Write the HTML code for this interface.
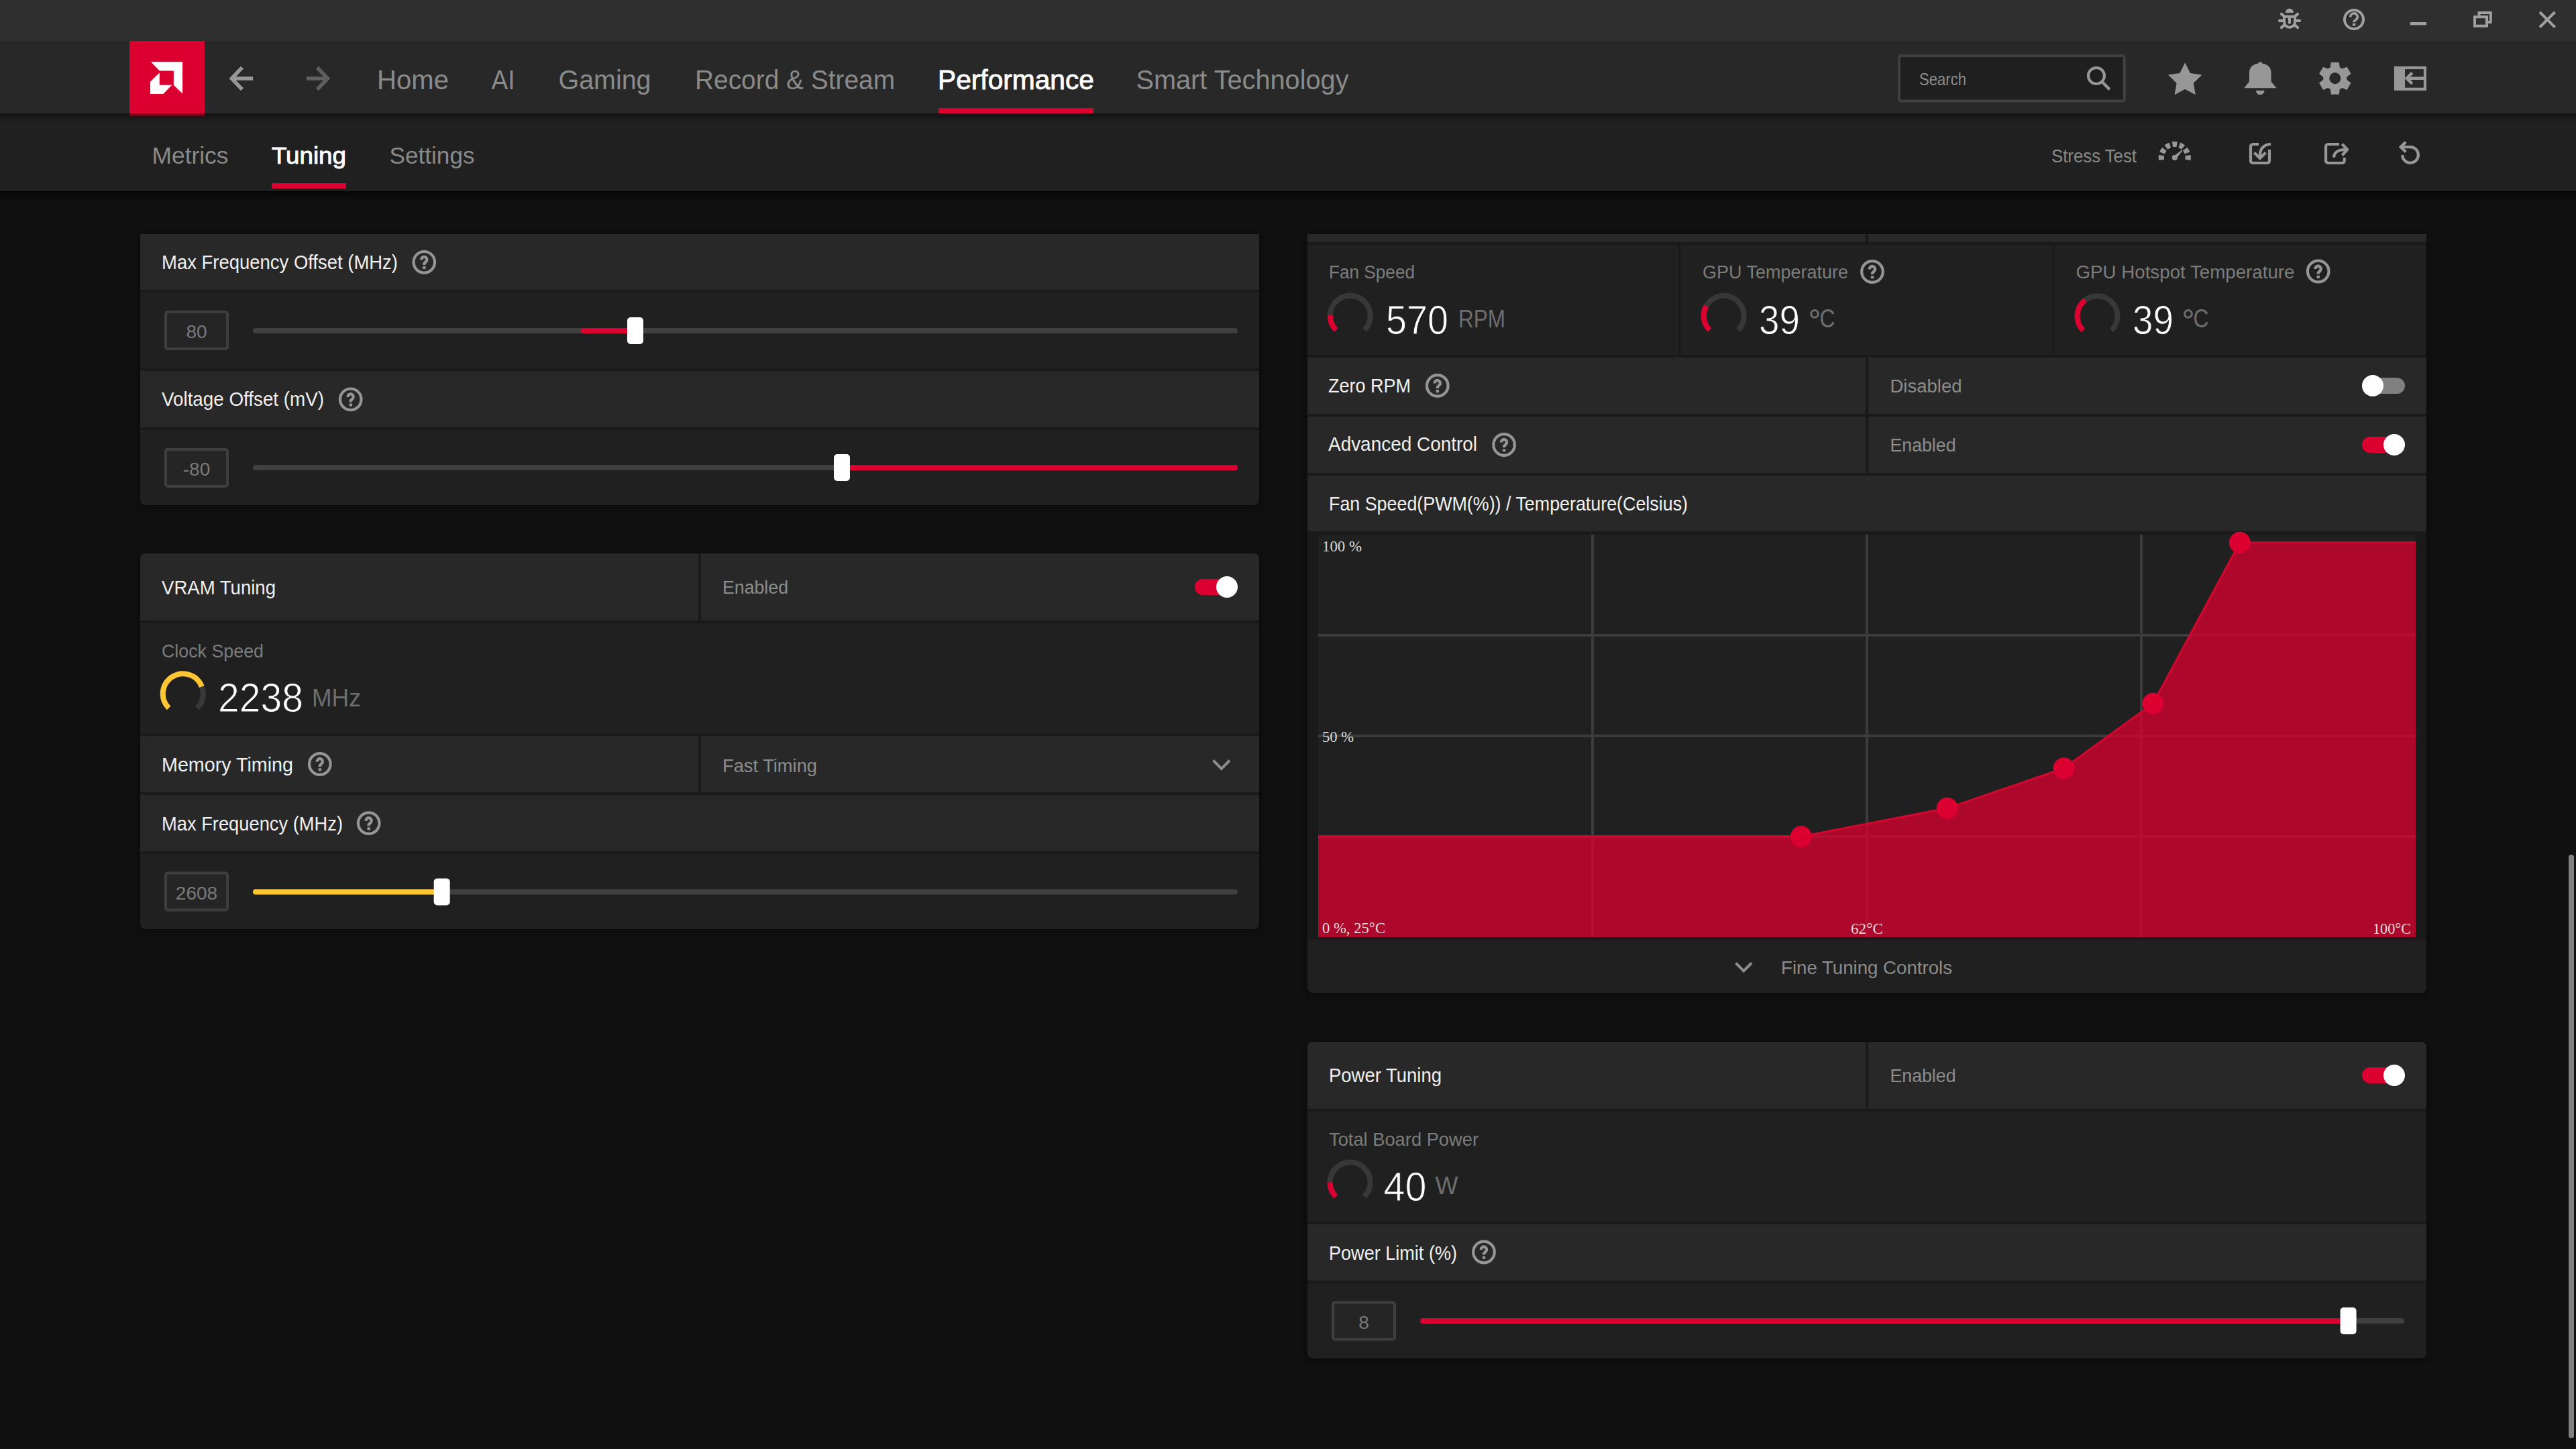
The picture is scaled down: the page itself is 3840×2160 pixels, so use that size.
<!DOCTYPE html>
<html><head><meta charset="utf-8">
<style>
*{box-sizing:border-box;margin:0;padding:0}
html,body{width:3840px;height:2160px;overflow:hidden;background:#101010;font-family:"Liberation Sans",sans-serif}
.a{position:absolute}
.hd{background:#282828}
.dk{background:#202020}
.gp{background:#1a1a1a;box-shadow:0 3px 10px rgba(0,0,0,0.45)}
svg{position:absolute;left:0;top:0}
</style></head><body>
<div class="a" style="left:0;top:0;width:3840px;height:61px;background:#2f2f2f"></div>
<div class="a" style="left:0;top:61px;width:3840px;height:108px;background:#282828"></div>
<div class="a" style="left:0;top:169px;width:3840px;height:116px;background:#202020"></div>
<div class="a" style="left:0;top:169px;width:3840px;height:14px;background:linear-gradient(#131313,#202020)"></div>
<div class="a" style="left:0;top:285px;width:3840px;height:16px;background:linear-gradient(#070707,rgba(16,16,16,0))"></div>

<!-- LEFT PANEL 1 -->
<div class="a gp" style="left:209px;top:349px;width:1668px;height:404px;border-radius:0 0 8px 8px;overflow:hidden">
  <div class="a hd" style="left:0;top:0;width:1668px;height:83px"></div>
  <div class="a dk" style="left:0;top:87px;width:1668px;height:113px"></div>
  <div class="a hd" style="left:0;top:204px;width:1668px;height:84px"></div>
  <div class="a dk" style="left:0;top:292px;width:1668px;height:112px"></div>
</div>

<!-- LEFT PANEL 2 VRAM -->
<div class="a gp" style="left:209px;top:825px;width:1668px;height:560px;border-radius:8px;overflow:hidden">
  <div class="a hd" style="left:0;top:0;width:832px;height:100px"></div>
  <div class="a hd" style="left:836px;top:0;width:832px;height:100px"></div>
  <div class="a dk" style="left:0;top:104px;width:1668px;height:164px"></div>
  <div class="a hd" style="left:0;top:272px;width:832px;height:84px"></div>
  <div class="a hd" style="left:836px;top:272px;width:832px;height:84px"></div>
  <div class="a hd" style="left:0;top:360px;width:1668px;height:84px"></div>
  <div class="a dk" style="left:0;top:448px;width:1668px;height:112px"></div>
</div>

<!-- RIGHT PANEL FAN -->
<div class="a gp" style="left:1949px;top:349px;width:1668px;height:1131px;border-radius:0 0 8px 8px;overflow:hidden">
  <div class="a hd" style="left:0;top:0;width:832px;height:12px"></div>
  <div class="a hd" style="left:836px;top:0;width:832px;height:12px"></div>
  <div class="a dk" style="left:0;top:16px;width:553px;height:164px"></div>
  <div class="a dk" style="left:557px;top:16px;width:553px;height:164px"></div>
  <div class="a dk" style="left:1114px;top:16px;width:554px;height:164px"></div>
  <div class="a hd" style="left:0;top:184px;width:832px;height:84px"></div>
  <div class="a hd" style="left:836px;top:184px;width:832px;height:84px"></div>
  <div class="a hd" style="left:0;top:272px;width:832px;height:84px"></div>
  <div class="a hd" style="left:836px;top:272px;width:832px;height:84px"></div>
  <div class="a hd" style="left:0;top:360px;width:1668px;height:83px"></div>
  <div class="a" style="left:16px;top:448px;width:1636px;height:600px;background:#202020"></div>
  <div class="a dk" style="left:0;top:1052px;width:1668px;height:79px"></div>
</div>

<!-- RIGHT PANEL POWER -->
<div class="a gp" style="left:1949px;top:1553px;width:1668px;height:472px;border-radius:8px;overflow:hidden">
  <div class="a hd" style="left:0;top:0;width:832px;height:100px"></div>
  <div class="a hd" style="left:836px;top:0;width:832px;height:100px"></div>
  <div class="a dk" style="left:0;top:104px;width:1668px;height:164px"></div>
  <div class="a hd" style="left:0;top:272px;width:1668px;height:84px"></div>
  <div class="a dk" style="left:0;top:360px;width:1668px;height:112px"></div>
</div>

<div class="a" style="left:3829px;top:1274px;width:8px;height:870px;border-radius:4px;background:#808080"></div>
<svg width="3840" height="2160" viewBox="0 0 3840 2160">
<defs><g id="help"><circle cx="0" cy="0" r="15.8" fill="none" stroke="#959595" stroke-width="4.2"/><path d="M-4.15,-3.4 L-4.15,-4.05 A4.1,4.1 0 1 1 3.3,-1.5 L0,2.2 L0,4.1" fill="none" stroke="#959595" stroke-width="4.3" stroke-linejoin="round"/><rect x="-2.15" y="6.2" width="4.4" height="4.1" fill="#959595"/></g></defs>
<path d="M3406.9,18.9 A6.1,6.1 0 0 1 3419.1,18.9 Z" fill="#a0a0a0"/>
<path d="M3403,22.8 H3423 V32.7 A10,10 0 0 1 3403,32.7 Z" fill="#a0a0a0"/>
<path d="M3406.9,26.8 H3419.1 V32.7 A6.1,6.1 0 0 1 3406.9,32.7 Z" fill="#2f2f2f"/>
<path d="M3411,26.8 H3415 V33.8 A2,2 0 0 1 3411,33.8 Z" fill="#a0a0a0"/>
<path d="M3401,20.9 L3405.1,24.5 M3425,20.9 L3420.9,24.5 M3398,30.9 H3403 M3428,30.9 H3423 M3401,41 L3405.1,37.4 M3425,41 L3420.9,37.4" fill="none" stroke="#a0a0a0" stroke-width="4.2" stroke-linecap="round"/>
<circle cx="3509" cy="29" r="14" fill="none" stroke="#a0a0a0" stroke-width="4"/>
<path d="M3503.8,25.5 A5.2,5.2 0 1 1 3511.8,29.5 C3510,30.6 3509,31.3 3509,33.2" fill="none" stroke="#a0a0a0" stroke-width="3.6"/>
<rect x="3506.9" y="34.8" width="4.4" height="3.8" fill="#a0a0a0"/>
<rect x="3593" y="33" width="24" height="4.4" fill="#a0a0a0"/>
<path d="M3695.5,23 V19 H3712.8 V33 H3708" fill="none" stroke="#a0a0a0" stroke-width="4"/>
<rect x="3689" y="25.2" width="18" height="13.5" fill="none" stroke="#a0a0a0" stroke-width="4"/>
<path d="M3786,18 L3808.6,40.6 M3808.6,18 L3786,40.6" stroke="#a0a0a0" stroke-width="4"/>
<rect x="193" y="61" width="112" height="112" fill="#dc0031"/>
<rect x="193" y="169" width="112" height="4" fill="#000" opacity="0.45"/>
<path d="M224.9,92.2 L272.1,92.2 L272.1,139.5 L258.9,126.9 L258.9,105.6 L237.8,105.6 Z" fill="#fff"/>
<path d="M237.8,108.5 L237.8,126.7 L256.3,126.7 L243.4,140.1 L224,140.1 L224,121.7 Z" fill="#fff"/>
<path d="M377.1,117 H346 M361,100.6 L345.4,117 L361,133.4" fill="none" stroke="#979797" stroke-width="5.6"/>
<path d="M456.9,117 H488 M472.9,100.6 L488.4,117 L472.9,133.4" fill="none" stroke="#5f5f5f" stroke-width="5.6"/>
<text x="562" y="133" font-size="41.2" fill="#8a8a8a" font-family="Liberation Sans" textLength="107" lengthAdjust="spacingAndGlyphs">Home</text>
<text x="732.5" y="133" font-size="41.2" fill="#8a8a8a" font-family="Liberation Sans" textLength="35" lengthAdjust="spacingAndGlyphs">AI</text>
<text x="832.5" y="133" font-size="41.2" fill="#8a8a8a" font-family="Liberation Sans" textLength="138" lengthAdjust="spacingAndGlyphs">Gaming</text>
<text x="1036" y="133" font-size="41.2" fill="#8a8a8a" font-family="Liberation Sans" textLength="298" lengthAdjust="spacingAndGlyphs">Record &amp; Stream</text>
<text x="1398" y="133" font-size="41.2" fill="#ffffff" font-family="Liberation Sans" stroke="#ffffff" stroke-width="0.9" textLength="233" lengthAdjust="spacingAndGlyphs">Performance</text>
<text x="1693.5" y="133" font-size="41.2" fill="#8a8a8a" font-family="Liberation Sans" textLength="317" lengthAdjust="spacingAndGlyphs">Smart Technology</text>
<rect x="1399" y="161" width="231" height="8" fill="#dc0031"/>
<rect x="2831" y="82.9" width="335.7" height="67.7" rx="3" fill="#1f1f1f" stroke="#404040" stroke-width="4"/>
<text x="2861" y="127.3" font-size="25.5" fill="#8c8c8c" font-family="Liberation Sans" textLength="70" lengthAdjust="spacingAndGlyphs">Search</text>
<circle cx="3124.95" cy="112.95" r="12" fill="none" stroke="#979797" stroke-width="4.1"/>
<path d="M3132.5,121 L3144.8,133.3" stroke="#979797" stroke-width="4.5"/>
<path d="M3257.20,93.20 L3264.96,109.12 L3282.50,111.58 L3269.75,123.88 L3272.84,141.32 L3257.20,133.00 L3241.56,141.32 L3244.65,123.88 L3231.90,111.58 L3249.44,109.12 Z" fill="#979797"/>
<path d="M3345.3,131.3 L3353,121.5 V108.5 C3353,99 3360,94.5 3369.3,94.5 C3378.6,94.5 3385.6,99 3385.6,108.5 V121.5 L3393.4,131.3 Z" fill="#979797"/>
<circle cx="3369.3" cy="96" r="3.6" fill="#979797"/>
<path d="M3362.9,135 A6.2,6.2 0 0 0 3375.5,135 Z" fill="#979797"/>
<path d="M3473.80,100.50 L3474.80,92.90 L3486.80,92.90 L3487.80,100.50 L3491.42,102.59 L3498.50,99.65 L3504.50,110.05 L3498.42,114.71 L3498.42,118.89 L3504.50,123.55 L3498.50,133.95 L3491.42,131.01 L3487.80,133.10 L3486.80,140.70 L3474.80,140.70 L3473.80,133.10 L3470.18,131.01 L3463.10,133.95 L3457.10,123.55 L3463.18,118.89 L3463.18,114.71 L3457.10,110.05 L3463.10,99.65 L3470.18,102.59 Z M3489.3,116.8 A8.5,8.5 0 1 0 3472.3,116.8 A8.5,8.5 0 1 0 3489.3,116.8 Z" fill="#979797" fill-rule="evenodd"/>
<rect x="3568.9" y="98.9" width="48.1" height="36.1" fill="#979797"/>
<rect x="3585.05" y="103.1" width="27.85" height="27.6" fill="#282828"/>
<path d="M3613,116.7 H3588 M3595.8,108.6 L3587.7,116.7 L3595.8,124.8" fill="none" stroke="#979797" stroke-width="4.5"/>
<text x="226.5" y="244" font-size="35" fill="#8a8a8a" font-family="Liberation Sans" textLength="114" lengthAdjust="spacingAndGlyphs">Metrics</text>
<text x="405" y="244" font-size="35" fill="#ffffff" font-family="Liberation Sans" stroke="#ffffff" stroke-width="0.9" textLength="111" lengthAdjust="spacingAndGlyphs">Tuning</text>
<text x="580.5" y="244" font-size="35" fill="#8a8a8a" font-family="Liberation Sans" textLength="127" lengthAdjust="spacingAndGlyphs">Settings</text>
<rect x="405" y="273" width="111" height="8" fill="#dc0031"/>
<text x="3058" y="241.5" font-size="28.5" fill="#8a8a8a" font-family="Liberation Sans" textLength="127" lengthAdjust="spacingAndGlyphs">Stress Test</text>
<path d="M3222.08,238.34 A20,20 0 0 1 3222.08,231.66" fill="none" stroke="#979797" stroke-width="8.2"/>
<path d="M3223.05,228.03 A20,20 0 0 1 3226.39,222.25" fill="none" stroke="#979797" stroke-width="8.2"/>
<path d="M3229.05,219.59 A20,20 0 0 1 3234.83,216.25" fill="none" stroke="#979797" stroke-width="8.2"/>
<path d="M3238.46,215.28 A20,20 0 0 1 3245.14,215.28" fill="none" stroke="#979797" stroke-width="8.2"/>
<path d="M3248.77,216.25 A20,20 0 0 1 3254.55,219.59" fill="none" stroke="#979797" stroke-width="8.2"/>
<path d="M3257.21,222.25 A20,20 0 0 1 3260.55,228.03" fill="none" stroke="#979797" stroke-width="8.2"/>
<path d="M3261.52,231.66 A20,20 0 0 1 3261.52,238.34" fill="none" stroke="#979797" stroke-width="8.2"/>
<path d="M3243.7,236.9 L3253.6,224.2 L3252.8,223.2 L3239.9,233.1 Z" fill="#979797"/>
<circle cx="3241.8" cy="235" r="4" fill="#979797"/>
<path d="M3367,215 H3358.5 A3.5,3.5 0 0 0 3355,218.5 V239.5 A3.5,3.5 0 0 0 3358.5,243 H3379.5 A3.5,3.5 0 0 0 3383,239.5 V223" fill="none" stroke="#979797" stroke-width="4.2"/>
<path d="M3385.1,215 C3375,215 3369,221.5 3369,231 V234" fill="none" stroke="#979797" stroke-width="4.2"/>
<path d="M3360.4,227.5 L3368.9,236 L3377.4,227.5" fill="none" stroke="#979797" stroke-width="4.3"/>
<path d="M3487,215 H3470.6 A3.5,3.5 0 0 0 3467.1,218.5 V239.5 A3.5,3.5 0 0 0 3470.6,243 H3491.2 A3.5,3.5 0 0 0 3494.7,239.5 V235" fill="none" stroke="#979797" stroke-width="4.2"/>
<path d="M3479.1,234.8 C3479.1,227.5 3485,223.2 3496,223.2" fill="none" stroke="#979797" stroke-width="4.2"/>
<path d="M3491.4,214.6 L3499,223.1 L3491.4,231.6" fill="none" stroke="#979797" stroke-width="4.3"/>
<path d="M3579.5,219.1 H3593.05 A11.85,11.85 0 1 1 3581.2,231.1" fill="none" stroke="#979797" stroke-width="4.2"/>
<path d="M3586.2,211.7 L3578.8,219.1 L3586.2,226.5" fill="none" stroke="#979797" stroke-width="4.3"/>
<text x="241" y="401.3" font-size="28.7" fill="#f0f0f0" font-family="Liberation Sans" textLength="352" lengthAdjust="spacingAndGlyphs">Max Frequency Offset (MHz)</text>
<use href="#help" x="632.3" y="390.8"/>
<rect x="247" y="465" width="92" height="55" rx="3" fill="#252525" stroke="#3e3e3e" stroke-width="4"/>
<text x="293" y="504" font-size="28" fill="#7a7a7a" font-family="Liberation Sans" text-anchor="middle">80</text>
<rect x="377" y="489" width="1468" height="8" rx="4" fill="#404040"/>
<rect x="866" y="489" width="84" height="8" rx="4" fill="#dc0031"/>
<rect x="935" y="473" width="24" height="40" rx="5" fill="#ffffff"/>
<text x="241" y="604.8" font-size="28.7" fill="#f0f0f0" font-family="Liberation Sans" textLength="242" lengthAdjust="spacingAndGlyphs">Voltage Offset (mV)</text>
<use href="#help" x="522.7" y="595.3"/>
<rect x="247" y="670" width="92" height="55" rx="3" fill="#252525" stroke="#3e3e3e" stroke-width="4"/>
<text x="293" y="709" font-size="28" fill="#7a7a7a" font-family="Liberation Sans" text-anchor="middle">-80</text>
<rect x="377" y="693" width="1468" height="8" rx="4" fill="#404040"/>
<rect x="1250" y="693" width="595" height="8" rx="4" fill="#dc0031"/>
<rect x="1243" y="677" width="24" height="40" rx="5" fill="#ffffff"/>
<text x="241" y="885.8" font-size="28.7" fill="#f0f0f0" font-family="Liberation Sans" textLength="170" lengthAdjust="spacingAndGlyphs">VRAM Tuning</text>
<text x="1077" y="885.2" font-size="28.2" fill="#8c8c8c" font-family="Liberation Sans" textLength="98" lengthAdjust="spacingAndGlyphs">Enabled</text>
<rect x="1781" y="863" width="56" height="24" rx="12" fill="#dc0031"/>
<circle cx="1829" cy="875" r="16" fill="#fff"/>
<text x="241" y="979.7" font-size="27.5" fill="#7c7c7c" font-family="Liberation Sans" textLength="152" lengthAdjust="spacingAndGlyphs">Clock Speed</text>
<path d="M251.59,1055.51 A30,30 0 1 1 294.01,1055.51" fill="none" stroke="#383838" stroke-width="8"/>
<path d="M251.59,1055.51 A30,30 0 1 1 300.81,1023.55" fill="none" stroke="#ffc533" stroke-width="8"/>
<text x="325" y="1061" font-size="61.5" fill="#ffffff" font-family="Liberation Sans" stroke="#202020" stroke-width="1.0" textLength="127" lengthAdjust="spacingAndGlyphs">2238</text>
<text x="465" y="1052.5" font-size="37" fill="#6e6e6e" font-family="Liberation Sans" textLength="73" lengthAdjust="spacingAndGlyphs">MHz</text>
<text x="241" y="1150.3" font-size="28.7" fill="#f0f0f0" font-family="Liberation Sans" textLength="196" lengthAdjust="spacingAndGlyphs">Memory Timing</text>
<use href="#help" x="476.8" y="1139"/>
<text x="1077" y="1150.6" font-size="28.2" fill="#8c8c8c" font-family="Liberation Sans" textLength="141" lengthAdjust="spacingAndGlyphs">Fast Timing</text>
<path d="M1808.5,1133.5 L1820.8,1146 L1833,1133.5" fill="none" stroke="#8c8c8c" stroke-width="4"/>
<text x="241" y="1238.0" font-size="28.7" fill="#f0f0f0" font-family="Liberation Sans" textLength="270" lengthAdjust="spacingAndGlyphs">Max Frequency (MHz)</text>
<use href="#help" x="549.7" y="1227.1"/>
<rect x="247" y="1301.5" width="92" height="55" rx="3" fill="#252525" stroke="#3e3e3e" stroke-width="4"/>
<text x="293" y="1340.5" font-size="28" fill="#7a7a7a" font-family="Liberation Sans" text-anchor="middle">2608</text>
<rect x="377" y="1325.4" width="1468" height="8" rx="4" fill="#404040"/>
<rect x="377" y="1325.4" width="285" height="8" rx="4" fill="#ffc533"/>
<rect x="646.7" y="1309.4" width="24" height="40" rx="5" fill="#ffffff"/>
<text x="1981" y="415" font-size="27" fill="#7c7c7c" font-family="Liberation Sans" textLength="128" lengthAdjust="spacingAndGlyphs">Fan Speed</text>
<path d="M1991.59,491.91 A30,30 0 1 1 2034.01,491.91" fill="none" stroke="#383838" stroke-width="8"/>
<path d="M1991.59,491.91 A30,30 0 0 1 1982.82,469.65" fill="none" stroke="#dc0031" stroke-width="8"/>
<text x="2066" y="498.3" font-size="61.5" fill="#ffffff" font-family="Liberation Sans" stroke="#202020" stroke-width="1.0" textLength="93" lengthAdjust="spacingAndGlyphs">570</text>
<text x="2174" y="487.5" font-size="36.8" fill="#6e6e6e" font-family="Liberation Sans" textLength="70" lengthAdjust="spacingAndGlyphs">RPM</text>
<text x="2538" y="415" font-size="27" fill="#7c7c7c" font-family="Liberation Sans" textLength="217" lengthAdjust="spacingAndGlyphs">GPU Temperature</text>
<use href="#help" x="2791" y="405"/>
<path d="M2548.49,492.01 A30,30 0 1 1 2590.91,492.01" fill="none" stroke="#383838" stroke-width="8"/>
<path d="M2548.49,492.01 A30,30 0 0 1 2543.46,456.26" fill="none" stroke="#dc0031" stroke-width="8"/>
<text x="2622" y="498" font-size="61.5" fill="#ffffff" font-family="Liberation Sans" stroke="#202020" stroke-width="1.0" textLength="61" lengthAdjust="spacingAndGlyphs">39</text>
<circle cx="2705.1" cy="467.9" r="5.3" fill="none" stroke="#6e6e6e" stroke-width="3"/>
<text x="2712.5" y="488" font-size="38.5" fill="#6e6e6e" font-family="Liberation Sans" textLength="23" lengthAdjust="spacingAndGlyphs">C</text>
<text x="3094.5" y="415" font-size="27" fill="#7c7c7c" font-family="Liberation Sans" textLength="326" lengthAdjust="spacingAndGlyphs">GPU Hotspot Temperature</text>
<use href="#help" x="3455.7" y="404.5"/>
<path d="M3105.29,492.51 A30,30 0 1 1 3147.71,492.51" fill="none" stroke="#383838" stroke-width="8"/>
<path d="M3105.29,492.51 A30,30 0 0 1 3108.24,447.50" fill="none" stroke="#dc0031" stroke-width="8"/>
<text x="3179" y="498" font-size="61.5" fill="#ffffff" font-family="Liberation Sans" stroke="#202020" stroke-width="1.0" textLength="61" lengthAdjust="spacingAndGlyphs">39</text>
<circle cx="3262" cy="467.9" r="5.3" fill="none" stroke="#6e6e6e" stroke-width="3"/>
<text x="3269.5" y="488" font-size="38.5" fill="#6e6e6e" font-family="Liberation Sans" textLength="23" lengthAdjust="spacingAndGlyphs">C</text>
<text x="1980" y="584.6" font-size="28.7" fill="#f0f0f0" font-family="Liberation Sans" textLength="123" lengthAdjust="spacingAndGlyphs">Zero RPM</text>
<use href="#help" x="2142.8" y="574.9"/>
<text x="2817.5" y="584.9" font-size="28.2" fill="#8c8c8c" font-family="Liberation Sans" textLength="107" lengthAdjust="spacingAndGlyphs">Disabled</text>
<rect x="3529" y="563" width="56" height="24" rx="12" fill="#808080"/>
<circle cx="3537" cy="575" r="16" fill="#fff"/>
<text x="1980" y="672.2" font-size="28.7" fill="#f0f0f0" font-family="Liberation Sans" textLength="222" lengthAdjust="spacingAndGlyphs">Advanced Control</text>
<use href="#help" x="2242.1" y="663"/>
<text x="2817.5" y="672.5" font-size="28.2" fill="#8c8c8c" font-family="Liberation Sans" textLength="98" lengthAdjust="spacingAndGlyphs">Enabled</text>
<rect x="3521" y="651" width="56" height="24" rx="12" fill="#dc0031"/>
<circle cx="3569" cy="663" r="16" fill="#fff"/>
<text x="1981" y="761.1" font-size="28.7" fill="#f0f0f0" font-family="Liberation Sans" textLength="535" lengthAdjust="spacingAndGlyphs">Fan Speed(PWM(%)) / Temperature(Celsius)</text>
<rect x="2372" y="797" width="4" height="600" fill="#3c3c3c"/>
<rect x="2781" y="797" width="4" height="600" fill="#3c3c3c"/>
<rect x="3190" y="797" width="4" height="600" fill="#3c3c3c"/>
<rect x="1965" y="945" width="1636" height="4" fill="#3c3c3c"/>
<rect x="1965" y="1095" width="1636" height="4" fill="#3c3c3c"/>
<rect x="1965" y="1245" width="1636" height="4" fill="#3c3c3c"/>
<path d="M1965,1397 L1965,1247 L2685,1247 L2902.7,1204.8 L3076.6,1145.2 L3209.5,1048.8 L3338.9,808.8 L3601,808.8 L3601,1397 Z" fill="rgba(220,0,48,0.75)"/>
<path d="M1965,1247 L2685,1247 L2902.7,1204.8 L3076.6,1145.2 L3209.5,1048.8 L3338.9,808.8 L3601,808.8" fill="none" stroke="#d0082e" stroke-width="3"/>
<circle cx="2685" cy="1247" r="16" fill="#dc0031"/>
<circle cx="2902.7" cy="1204.8" r="16" fill="#dc0031"/>
<circle cx="3076.6" cy="1145.2" r="16" fill="#dc0031"/>
<circle cx="3209.5" cy="1048.8" r="16" fill="#dc0031"/>
<circle cx="3338.9" cy="808.8" r="16" fill="#dc0031"/>
<text x="1971" y="822" font-size="24" fill="#dcdcdc" font-family="Liberation Serif" textLength="59" lengthAdjust="spacingAndGlyphs">100 %</text>
<text x="1971" y="1106" font-size="24" fill="#dcdcdc" font-family="Liberation Serif" textLength="47" lengthAdjust="spacingAndGlyphs">50 %</text>
<text x="1971" y="1391" font-size="24" fill="#dcdcdc" font-family="Liberation Serif" textLength="94" lengthAdjust="spacingAndGlyphs">0 %, 25°C</text>
<text x="2759" y="1392" font-size="24" fill="#dcdcdc" font-family="Liberation Serif" textLength="48" lengthAdjust="spacingAndGlyphs">62°C</text>
<text x="3537" y="1392" font-size="24" fill="#dcdcdc" font-family="Liberation Serif" textLength="57" lengthAdjust="spacingAndGlyphs">100°C</text>
<path d="M2587.5,1435.5 L2599.3,1447.5 L2611,1435.5" fill="none" stroke="#8c8c8c" stroke-width="4"/>
<text x="2655" y="1452.3" font-size="28.2" fill="#8c8c8c" font-family="Liberation Sans" textLength="255" lengthAdjust="spacingAndGlyphs">Fine Tuning Controls</text>
<text x="1981" y="1613.3" font-size="28.7" fill="#f0f0f0" font-family="Liberation Sans" textLength="168" lengthAdjust="spacingAndGlyphs">Power Tuning</text>
<text x="2817.5" y="1613.1" font-size="28.2" fill="#8c8c8c" font-family="Liberation Sans" textLength="98" lengthAdjust="spacingAndGlyphs">Enabled</text>
<rect x="3521" y="1591" width="56" height="24" rx="12" fill="#dc0031"/>
<circle cx="3569" cy="1603" r="16" fill="#fff"/>
<text x="1981" y="1708" font-size="27.5" fill="#7c7c7c" font-family="Liberation Sans" textLength="223" lengthAdjust="spacingAndGlyphs">Total Board Power</text>
<path d="M1991.39,1783.81 A30,30 0 1 1 2033.81,1783.81" fill="none" stroke="#383838" stroke-width="8"/>
<path d="M1991.39,1783.81 A30,30 0 0 1 1982.60,1762.60" fill="none" stroke="#dc0031" stroke-width="8"/>
<text x="2062.5" y="1789.5" font-size="61.5" fill="#ffffff" font-family="Liberation Sans" stroke="#202020" stroke-width="1.0" textLength="64" lengthAdjust="spacingAndGlyphs">40</text>
<text x="2139.5" y="1779.8" font-size="37" fill="#6e6e6e" font-family="Liberation Sans" textLength="34" lengthAdjust="spacingAndGlyphs">W</text>
<text x="1981" y="1877.9" font-size="28.7" fill="#f0f0f0" font-family="Liberation Sans" textLength="191" lengthAdjust="spacingAndGlyphs">Power Limit (%)</text>
<use href="#help" x="2212" y="1866.5"/>
<rect x="1987" y="1941.5" width="92" height="55" rx="3" fill="#252525" stroke="#3e3e3e" stroke-width="4"/>
<text x="2033" y="1980.5" font-size="28" fill="#7a7a7a" font-family="Liberation Sans" text-anchor="middle">8</text>
<rect x="2117" y="1965" width="1467" height="8" rx="4" fill="#404040"/>
<rect x="2117" y="1965" width="1387" height="8" rx="4" fill="#dc0031"/>
<rect x="3488.6" y="1949" width="24" height="40" rx="5" fill="#ffffff"/>
</svg>
</body></html>
